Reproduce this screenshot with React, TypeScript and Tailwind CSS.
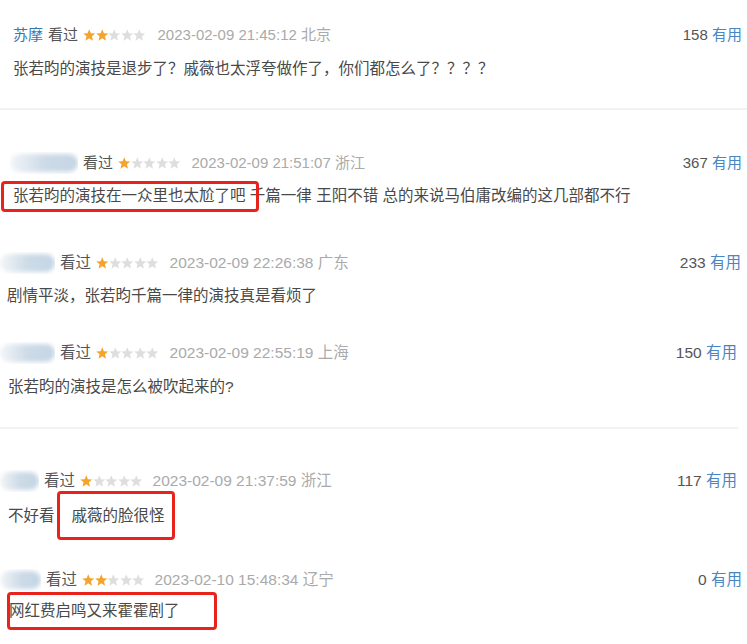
import type { ReactNode } from "react";

const FONT = "font-['Liberation_Sans','Noto_Sans_CJK_SC',sans-serif]";

function Stars({ n }: { n: number }) {
  return (
    <span className="flex items-center">
      {[0, 1, 2, 3, 4].map((i) => (
        <svg key={i} width="12.5" height="12" viewBox="0 0 24 23">
          <polygon
            points="12,0.5 15.2,8 23.5,8.6 17.2,14 19.2,22.3 12,17.8 4.8,22.3 6.8,14 0.5,8.6 8.8,8"
            fill={i < n ? "#f4a32b" : "#dedede"}
          />
        </svg>
      ))}
    </span>
  );
}

function Blur({ w }: { w: number }) {
  return (
    <span className="relative flex h-[22px] items-center overflow-hidden" style={{ width: w }}>
      <span className="h-[18px] w-full rounded-full bg-gradient-to-r from-[#f3f5f8] via-[#cddbe7] to-[#c4d5e4] blur-[2px]" />
    </span>
  );
}

function Mark({
  children,
  box,
}: {
  children: ReactNode;
  box: string;
}) {
  return (
    <span className="relative">
      {children}
      <span className={`absolute rounded-[4px] border-[3px] border-[#e8231b] ${box}`} />
    </span>
  );
}

interface Head {
  who: ReactNode;
  stars: number;
  date: string;
  place: string;
  count: number;
  pl: string;
  pr: string;
  gapStars: string;
}

function Header({ h }: { h: Head }) {
  return (
    <div className={`flex h-5 items-center justify-between ${h.pl} ${h.pr}`}>
      <div className="flex items-center">
        {h.who}
        <span className="ml-[5px] text-[#555]">看过</span>
        <span className="ml-[5px]">
          <Stars n={h.stars} />
        </span>
        <span className={`${h.gapStars} text-[#aaa]`}>
          {h.date} {h.place}
        </span>
      </div>
      <div>
        <span className="text-[#555]">{h.count}</span>{" "}
        <span className="text-[#4a86c2]">有用</span>
      </div>
    </div>
  );
}

export default function App() {
  return (
    <div className={`relative h-[644px] w-[747px] overflow-hidden bg-white text-[15px] leading-5 text-[#494949] ${FONT}`}>
      {/* 1 */}
      <div className="pt-[25px]">
        <Header
          h={{
            who: <span className="text-[#3a78ad]">苏摩</span>,
            stars: 2,
            date: "2023-02-09 21:45:12",
            place: "北京",
            count: 158,
            pl: "pl-[13px]",
            pr: "pr-[5px]",
            gapStars: "ml-[12px]",
          }}
        />
        <div className="mt-[14px] pl-[13px] text-[15.5px]">张若昀的演技是退步了？戚薇也太浮夸做作了，你们都怎么了？？？？</div>
      </div>
      <div className="mt-[29px] h-[2px] bg-[#f2f2f2]" />

      {/* 2 */}
      <div className="mt-[43px] text-[15.5px]">
        <Header
          h={{
            who: <Blur w={68} />,
            stars: 1,
            date: "2023-02-09 21:51:07",
            place: "浙江",
            count: 367,
            pl: "pl-[10px] text-[15px]",
            pr: "pr-[5px]",
            gapStars: "ml-[11px]",
          }}
        />
        <div className="mt-[13px] pl-[13px]">
          <Mark box="-left-[12px] -right-[13px] -top-[6px] -bottom-[8px]">张若昀的演技在一众里也太尬了吧</Mark>{" "}
          千篇一律 王阳不错 总的来说马伯庸改编的这几部都不行
        </div>
      </div>

      {/* 3 */}
      <div className="mt-[47px] text-[15.5px]">
        <Header
          h={{
            who: <Blur w={55} />,
            stars: 1,
            date: "2023-02-09 22:26:38",
            place: "广东",
            count: 233,
            pl: "pl-0",
            pr: "pr-[6px]",
            gapStars: "ml-[11px]",
          }}
        />
        <div className="mt-[13px] pl-[7px]">剧情平淡，张若昀千篇一律的演技真是看烦了</div>
      </div>

      {/* 4 */}
      <div className="mt-[37px] text-[15.5px]">
        <Header
          h={{
            who: <Blur w={55} />,
            stars: 1,
            date: "2023-02-09 22:55:19",
            place: "上海",
            count: 150,
            pl: "pl-0",
            pr: "pr-[10px]",
            gapStars: "ml-[11px]",
          }}
        />
        <div className="mt-[14px] pl-[8px]">张若昀的演技是怎么被吹起来的?</div>
      </div>
      <div className="mt-[30px] mr-[9px] h-[2px] bg-[#f2f2f2]" />

      {/* 5 */}
      <div className="mt-[42px] text-[15.5px]">
        <Header
          h={{
            who: <Blur w={39} />,
            stars: 1,
            date: "2023-02-09 21:37:59",
            place: "浙江",
            count: 117,
            pl: "pl-0",
            pr: "pr-[10px]",
            gapStars: "ml-[10px]",
          }}
        />
        <div className="mt-[15px] pl-[8px]">
          不好看
          <span className="ml-[17px]">
            <Mark box="-left-[15px] -right-[10px] -top-[16px] -bottom-[16px]">戚薇的脸很怪</Mark>
          </span>
        </div>
      </div>

      {/* 6 */}
      <div className="mt-[44px] text-[15.5px]">
        <Header
          h={{
            who: <Blur w={41} />,
            stars: 2,
            date: "2023-02-10 15:48:34",
            place: "辽宁",
            count: 0,
            pl: "pl-0",
            pr: "pr-[5px]",
            gapStars: "ml-[10px]",
          }}
        />
        <div className="mt-[11px] pl-[9px]">
          <Mark box="-left-[2px] -right-[37px] -top-[10px] -bottom-[11px]">网红费启鸣又来霍霍剧了</Mark>
        </div>
      </div>
    </div>
  );
}
